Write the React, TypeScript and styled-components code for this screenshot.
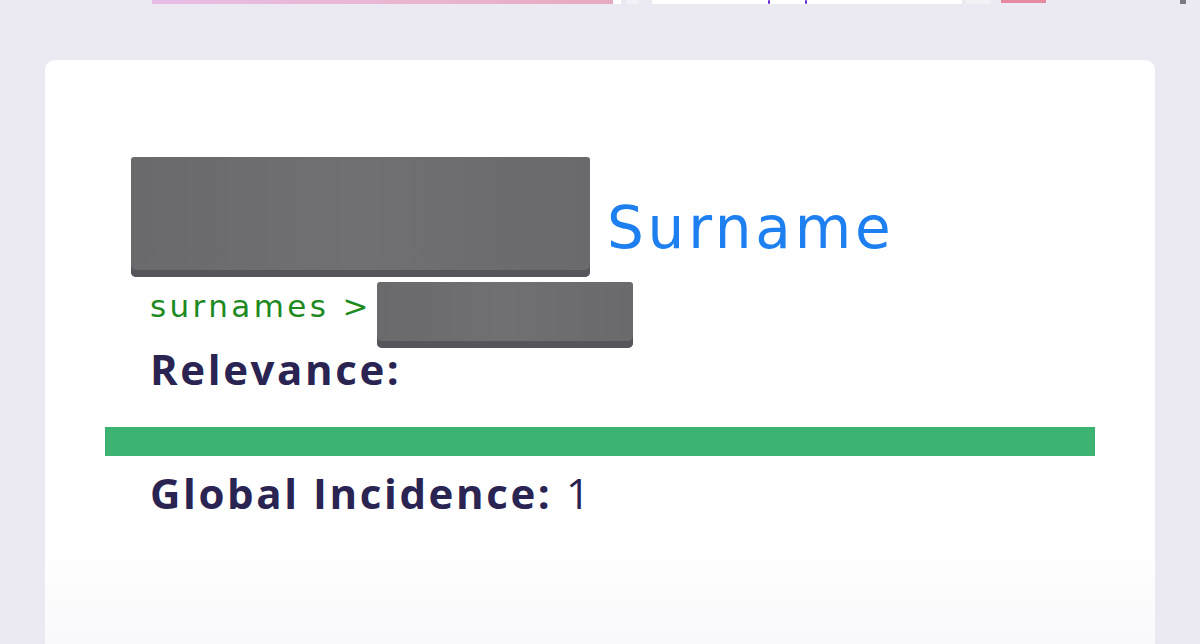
import React from "react";
import styled, { createGlobalStyle } from "styled-components";

const Global = createGlobalStyle`
  html, body { margin: 0; padding: 0; }
  body {
    background: #ebe9f2;
    font-family: "Open Sans", "Noto Sans", sans-serif;
    width: 1200px;
    height: 644px;
    overflow: hidden;
  }
`;

const Page = styled.div`
  width: 1200px;
  height: 644px;
  display: flex;
  flex-direction: column;
  overflow: hidden;
`;

const TopStrip = styled.div`
  height: 4px;
  display: flex;
  align-items: flex-start;
  padding-left: 152px;
`;

const StripPiece = styled.div<{ $w: number; $bg: string; $ml?: number; $h?: number }>`
  width: ${(p) => p.$w}px;
  height: ${(p) => p.$h ?? 4}px;
  margin-left: ${(p) => p.$ml ?? 0}px;
  background: ${(p) => p.$bg};
  flex-shrink: 0;
  position: relative;
`;

const PurpleMark = styled.span<{ $x: number }>`
  position: absolute;
  top: 0;
  left: ${(p) => p.$x}px;
  width: 2px;
  height: 4px;
  background: #6a2bd6;
  border-radius: 1px;
`;

const Card = styled.div`
  margin: 56px 45px 0 45px;
  flex: 1;
  background: linear-gradient(#ffffff 0%, #ffffff 82%, #f9f9fb 100%);
  border-radius: 10px 10px 0 0;
  padding: 97px 0 0 0;
  display: flex;
  flex-direction: column;
`;

const Redact = styled.div<{ $w: number; $h: number }>`
  width: ${(p) => p.$w}px;
  height: ${(p) => p.$h}px;
  background: linear-gradient(90deg, #6a6a6c, #707072 50%, #6a6a6c);
  border-radius: 3px 3px 5px 5px;
  box-shadow: inset 0 -7px 0 #55555c;
  flex-shrink: 0;
`;

const TitleRow = styled.div`
  display: flex;
  align-items: flex-end;
  padding-left: 86px;
  gap: 17px;
`;

const Title = styled.span`
  color: #1d7ff0;
  font-family: "DejaVu Sans", "Open Sans", sans-serif;
  font-size: 58px;
  font-weight: 400;
  line-height: 1;
  letter-spacing: 3.8px;
  margin-bottom: 20px;
`;

const CrumbRow = styled.div`
  display: flex;
  align-items: flex-start;
  padding-left: 105px;
  margin-top: 5px;
  gap: 5px;
`;

const Crumb = styled.span`
  color: #1e8a1e;
  font-family: "DejaVu Sans", "Open Sans", sans-serif;
  font-size: 31px;
  line-height: 1;
  margin-top: 9px;
  letter-spacing: 3.4px;
`;

const Label = styled.div<{ $mt?: number }>`
  padding-left: 105px;
  margin-top: ${(p) => p.$mt ?? 0}px;
  color: #2a2452;
  font-size: 42px;
  font-weight: 700;
  line-height: 1;
  letter-spacing: 2.6px;
`;

const Value = styled.span`
  font-weight: 400;
`;

const Bar = styled.div`
  margin: 37px 0 0 60px;
  width: 990px;
  height: 29px;
  background: #3cb371;
`;

const App: React.FC = () => (
  <Page>
    <Global />
    <TopStrip>
      <StripPiece $w={461} $bg="linear-gradient(90deg,#e7bde6,#eab5cf 60%,#e6a9c0)" />
      <StripPiece $w={8} $bg="#ffffff" />
      <StripPiece $w={12} $ml={6} $bg="#f2f1f5" />
      <StripPiece $w={310} $ml={13} $bg="#ffffff">
        <PurpleMark $x={116} />
        <PurpleMark $x={153} />
      </StripPiece>
      <StripPiece $w={25} $ml={4} $bg="#f2f1f5" />
      <StripPiece $w={45} $ml={10} $h={3} $bg="#e58aa0" />
      <StripPiece $w={6} $ml={134} $h={4} $bg="#7a7a80" />
    </TopStrip>
    <Card>
      <TitleRow>
        <Redact $w={459} $h={120} />
        <Title>Surname</Title>
      </TitleRow>
      <CrumbRow>
        <Crumb>surnames &gt;</Crumb>
        <Redact $w={256} $h={66} />
      </CrumbRow>
      <Label>Relevance:</Label>
      <Bar />
      <Label $mt={16}>
        Global Incidence: <Value>1</Value>
      </Label>
    </Card>
  </Page>
);

export default App;
